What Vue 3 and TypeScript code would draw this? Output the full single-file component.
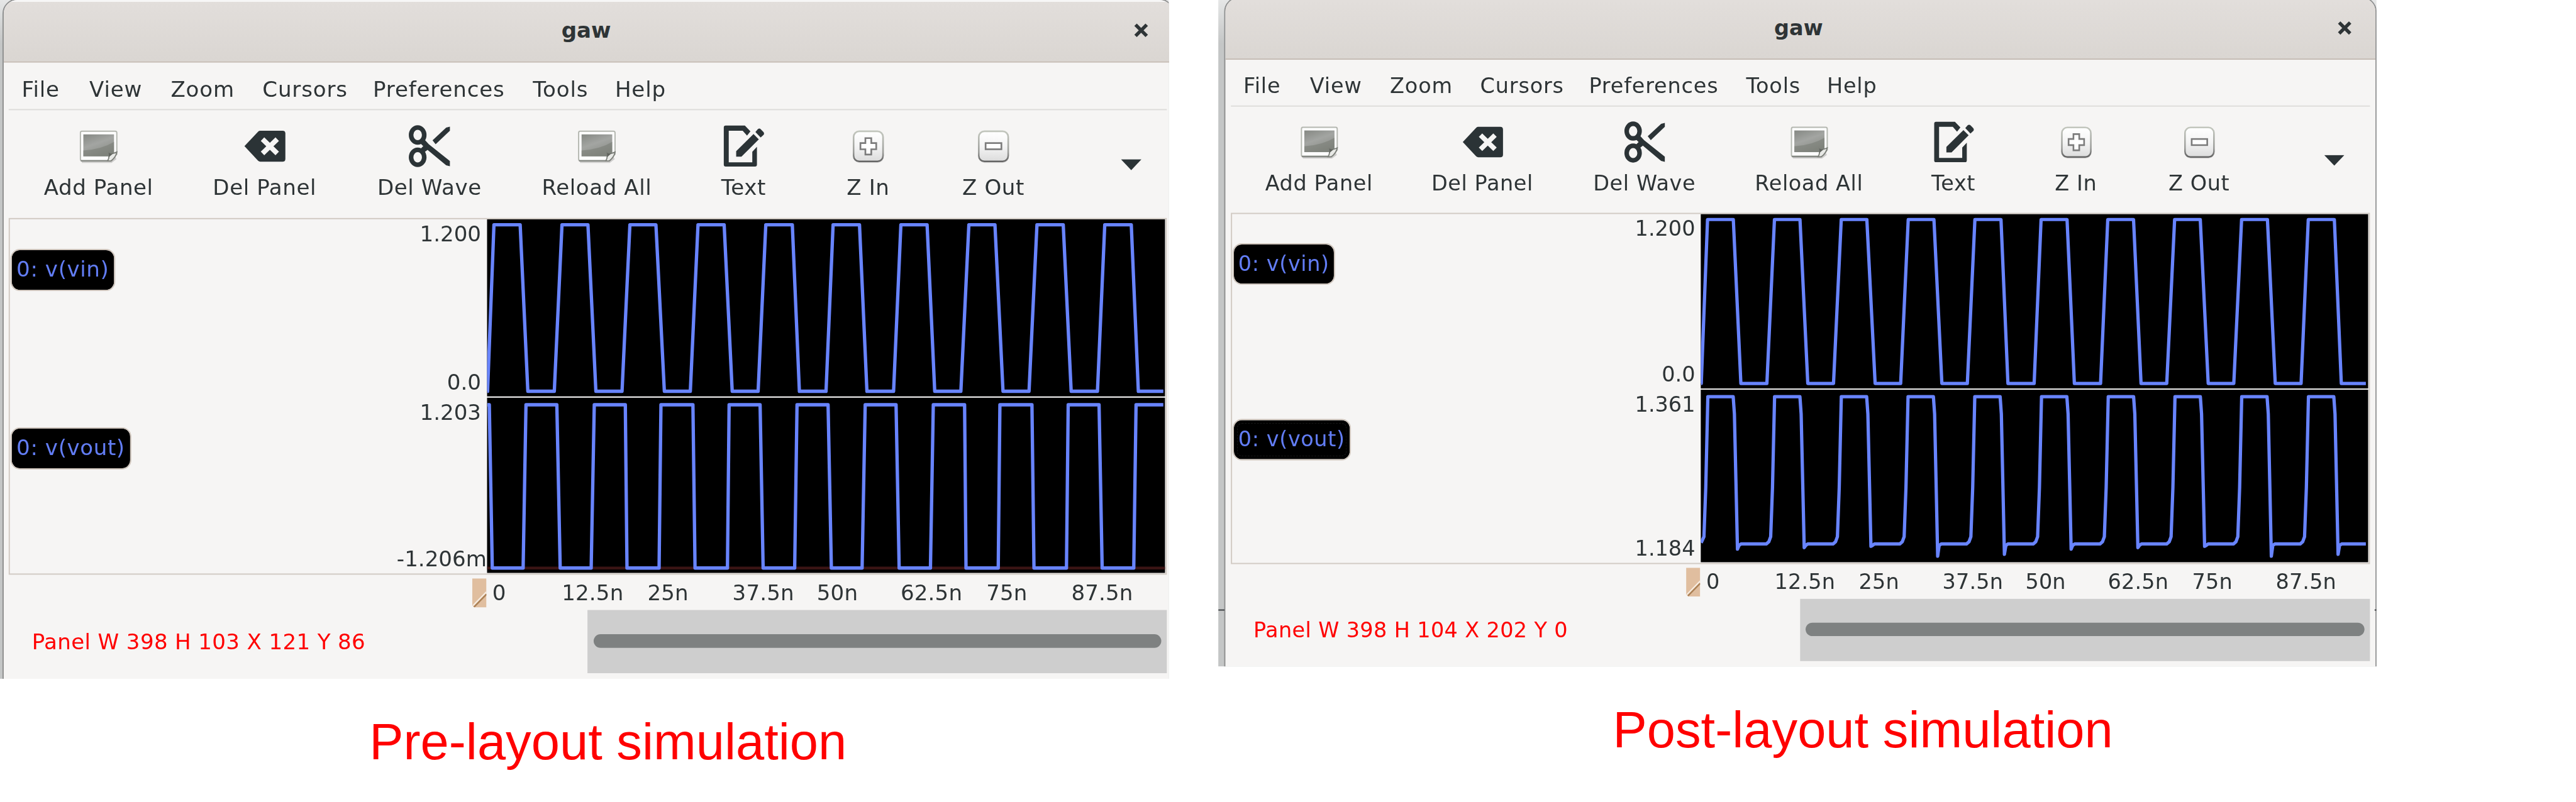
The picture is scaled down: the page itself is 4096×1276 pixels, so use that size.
<script setup lang="ts">
interface Panel {
  name: string
  focus: boolean
  high: string
  low: string
  trace: string
  zeroLine: boolean
}
interface Sim {
  id: string
  caption: string
  status: string
  panels: Panel[]
}
type Point = [number, number]

const X0 = 786.4
const END = 1877.7

const toPoints = (pts: Point[]): string =>
  pts.map(([x, y]) => `${(x - X0).toFixed(1)},${y.toFixed(1)}`).join(' ')

/* Square-like wave: every pair of x values is one edge (start, end). */
function edges(first: number, high: number, low: number, startHigh: boolean, xs: number[]): string {
  const pts: Point[] = [[first, startHigh ? high : low]]
  let up = startHigh
  for (let i = 0; i < xs.length; i += 2) {
    pts.push([xs[i], up ? high : low])
    up = !up
    pts.push([xs[i + 1], up ? high : low])
  }
  pts.push([END, up ? high : low])
  return toPoints(pts)
}

const vin = edges(787, 9, 277.8, false, [
  787.2, 797.5, 839.8, 852.2, 894.9, 907.3, 949.2, 962, 1004.2, 1016.9, 1058.9, 1072.5, 1114.4, 1126.8,
  1169, 1182, 1223.8, 1236.2, 1279, 1290.4, 1333.4, 1344.8, 1387.4, 1399.4, 1442.4, 1454.2, 1496.5, 1508.8,
  1551, 1563.9, 1606, 1619, 1661, 1673.8, 1716.2, 1729, 1771.4, 1783.2, 1826, 1837.4,
])

const voutPre = edges(787, 11.6, 275.2, true, [
  790, 794.8, 844.6, 849.2, 899, 904.4, 954.4, 959.4, 1009.5, 1012.2, 1064, 1067, 1118.6, 1122,
  1174.3, 1177, 1227, 1231.9, 1282.8, 1286.6, 1336.7, 1342, 1391.6, 1396.6, 1446.4, 1451.4, 1501.9, 1506.5,
  1557, 1559.3, 1611.3, 1614, 1665.7, 1669, 1721.4, 1724.2, 1774, 1779, 1830, 1833.7,
])

function postTrace(): string {
  const high = 11.6
  const flat = 253
  const dips = [261.5, 259, 256.8, 273, 270]
  const pts: Point[] = [[787, 251]]
  for (let k = 0; k < 10; k++) {
    const b = 798 + 109.5 * k
    if (k > 0) pts.push([b - 13.6, flat], [b - 9.5, 249.5])
    pts.push([b - 6.4, 241], [b - 3.4, 160], [b, high])
    pts.push([b + 41.6, high], [b + 43.6, 40])
    pts.push([b + 48.6, dips[k % 5]], [b + 51, 255.5], [b + 54.5, flat])
  }
  pts.push([END, flat])
  return toPoints(pts)
}

const sims: Sim[] = [
  {
    id: 'pre',
    caption: 'Pre-layout simulation',
    status: 'Panel W 398 H 103 X 121 Y 86',
    panels: [
      { name: '0: v(vin)', focus: false, high: '1.200', low: '0.0', trace: vin, zeroLine: false },
      { name: '0: v(vout)', focus: false, high: '1.203', low: '-1.206m', trace: voutPre, zeroLine: true },
    ],
  },
  {
    id: 'post',
    caption: 'Post-layout simulation',
    status: 'Panel W 398 H 104 X 202 Y 0',
    panels: [
      { name: '0: v(vin)', focus: false, high: '1.200', low: '0.0', trace: vin, zeroLine: false },
      { name: '0: v(vout)', focus: true, high: '1.361', low: '1.184', trace: postTrace(), zeroLine: false },
    ],
  },
]

const menus = [
  { label: 'File', w: 109.2 },
  { label: 'View', w: 131.3 },
  { label: 'Zoom', w: 148 },
  { label: 'Cursors', w: 178.4 },
  { label: 'Preferences', w: 258 },
  { label: 'Tools', w: 132.6 },
  { label: 'Help', w: 120 },
]
const tools = [
  { label: 'Add Panel', icon: 'picture', w: 266 },
  { label: 'Del Panel', icon: 'delete', w: 270 },
  { label: 'Del Wave', icon: 'cut', w: 262 },
  { label: 'Reload All', icon: 'picture', w: 278 },
  { label: 'Text', icon: 'edit', w: 196 },
  { label: 'Z In', icon: 'plus', w: 206 },
  { label: 'Z Out', icon: 'minus', w: 198 },
]
const ticks = [
  { label: '0', w: 112 },
  { label: '12.5n', w: 138.3 },
  { label: '25n', w: 137.1 },
  { label: '37.5n', w: 136.2 },
  { label: '50n', w: 135.2 },
  { label: '62.5n', w: 138.3 },
  { label: '75n', w: 137.2 },
  { label: '87.5n', w: 140 },
]
</script>

<template>
  <div class="viewport">
    <div class="stage">
      <figure v-for="sim in sims" :key="sim.id" :class="['figure', sim.id]">
        <div class="slot">
          <div class="window">
            <header class="titlebar">
              <span class="title">gaw</span>
              <svg class="close" viewBox="0 0 25 24">
                <path d="M3.5 3 L21.5 21 M21.5 3 L3.5 21" stroke="#2e3436" stroke-width="5.6" fill="none" />
              </svg>
            </header>
            <nav class="menubar">
              <span v-for="m in menus" :key="m.label" class="menu" :style="{ width: m.w + 'px' }">{{ m.label }}</span>
            </nav>
            <div class="toolbar">
              <div v-for="t in tools" :key="t.label" class="tool" :style="{ width: t.w + 'px' }">
                <svg class="icon" viewBox="0 0 70 70">
                  <defs>
                    <linearGradient id="photo" x1="0" y1="0" x2="0.5" y2="1">
                      <stop offset="0" stop-color="#858883" />
                      <stop offset="0.5" stop-color="#a3a5a2" />
                      <stop offset="1" stop-color="#8b8e88" />
                    </linearGradient>
                    <linearGradient id="key" x1="0" y1="0" x2="0" y2="1">
                      <stop offset="0" stop-color="#ffffff" />
                      <stop offset="0.5" stop-color="#f4f4f4" />
                      <stop offset="1" stop-color="#dcdcdc" />
                    </linearGradient>
                    <linearGradient id="keyEdge" x1="0" y1="0" x2="0" y2="1">
                      <stop offset="0" stop-color="#c3c7be" />
                      <stop offset="0.7" stop-color="#9b9c99" />
                      <stop offset="1" stop-color="#646464" />
                    </linearGradient>
                  </defs>
                  <g v-if="t.icon === 'picture'">
                    <path d="M8 60 H54 L62 53 L64 57 L56 63 H8 Z" fill="#000" opacity="0.16" />
                    <path d="M8 11.800 H62 Q64.500 11.800 64.500 14.500 V49 L55 59.500 H8 Q5.800 59.500 5.800 57 V14.500 Q5.800 11.800 8 11.800 Z" fill="#fdfdfd" stroke="#b4b7b0" stroke-width="2" />
                    <path d="M6.500 59.700 H55" stroke="#858883" stroke-width="2.400" />
                    <rect x="10.500" y="17" width="49.500" height="35.500" fill="url(#photo)" />
                    <path d="M10.500 43 Q40 41 60 29 V52.500 H10.500 Z" fill="#747770" opacity="0.5" />
                    <path d="M49.500 60 Q53 55 51.500 47 Q55 50 64.500 45.500 Q63 54 55 60 Z" fill="#e8e9e6" stroke="#7b7e78" stroke-width="1.800" />
                    <path d="M51.500 54 Q52.500 50 51.500 46.500 Q55 49 59 47.500 Z" fill="#5f625c" />
                  </g>
                  <g v-else-if="t.icon === 'delete'">
                    <path d="M2.500 36 L24.500 12.500 Q26 11 28 11 H64 Q68.500 11 68.500 15.500 V56.500 Q68.500 61 64 61 H28 Q26 61 24.500 59.500 Z" fill="#2b3336" />
                    <path d="M34.500 27.500 L52.500 45 M52.500 27.500 L34.500 45" stroke="#f6f5f4" stroke-width="8" stroke-linecap="square" />
                  </g>
                  <g v-else-if="t.icon === 'cut'" fill="none" stroke="#2b3336">
                    <ellipse cx="16" cy="18" rx="10.600" ry="12" stroke-width="7.400" />
                    <ellipse cx="16" cy="54" rx="10.600" ry="12" stroke-width="7.400" />
                    <path d="M25 23 L34 33 L68 60 V68.500 L62 67 L32 42 L24 48 L19 42 L25 36 L19 30 Z" fill="#2b3336" stroke="none" />
                    <path d="M40 26.500 L62 6 L68 4.500 V11 L45 33 Z" fill="#2b3336" stroke="none" />
                  </g>
                  <g v-else-if="t.icon === 'edit'" fill="#2b3336">
                    <path d="M6 2.800 H37 L46 12 L40.500 19 L33.500 11 H11 V62 H49 V45 L56.500 37 V66 Q56.500 69 53.500 69 H6 Q3 69 3 66 V5.800 Q3 2.800 6 2.800 Z" />
                    <path d="M23 44 L51 16.500 L59.500 25 L31.500 53 H23 Z" />
                    <path d="M54 13 L58 8.500 Q60.500 6.500 63 9 L67 13 Q69 15.500 67 18 L62.500 22 Z" />
                  </g>
                  <g v-else>
                    <rect x="11" y="14" width="49" height="49" rx="10" fill="#000" opacity="0.14" />
                    <rect x="11.500" y="12" width="47.500" height="48.500" rx="9" fill="url(#key)" stroke="url(#keyEdge)" stroke-width="2.600" />
                    <path
                      v-if="t.icon === 'plus'"
                      d="M30.500 23 H40 V31 H48 V41 H40 V49.500 H30.500 V41 H22.500 V31 H30.500 Z"
                      fill="#fff" stroke="#7c7c7c" stroke-width="2.700"
                    />
                    <rect v-else x="22.500" y="31" width="25.500" height="10" fill="#fff" stroke="#7c7c7c" stroke-width="2.700" />
                  </g>
                </svg>
                <span class="tool-label">{{ t.label }}</span>
              </div>
              <svg class="more" viewBox="0 0 34 18"><path d="M0 0 H34 L17 18 Z" fill="#2b3336" /></svg>
            </div>
            <main class="panels">
              <section v-for="(p, i) in sim.panels" :key="i" class="panel">
                <div class="names">
                  <span :class="['badge', { focus: p.focus }]">{{ p.name }}</span>
                </div>
                <div class="scale">
                  <span :class="{ wide: p.high.length > 6 }">{{ p.high }}</span>
                  <span :class="{ wide: p.low.length > 6 }">{{ p.low }}</span>
                </div>
                <svg class="plot" viewBox="0 0 1094.400 286">
                  <path v-if="p.zeroLine" d="M0 275.200 H1094.400" stroke="#3a1414" stroke-width="4.600" />
                  <polyline :points="p.trace" fill="none" stroke="#6884ff" stroke-width="5.400" stroke-linejoin="round" />
                </svg>
              </section>
            </main>
            <div class="axis">
              <svg class="corner" viewBox="0 0 23 47">
                <path d="M0 0 H23 V47 H3 L0 43 Z" fill="#e0be9f" />
                <path d="M1.500 44 L23 22" stroke="#f7ece0" stroke-width="2.600" />
                <path d="M3 46 L23 25.500" stroke="#ab8055" stroke-width="2.600" />
              </svg>
              <span v-for="t in ticks" :key="t.label" class="tick" :style="{ width: t.w + 'px' }">{{ t.label }}</span>
            </div>
            <footer class="statusbar">
              <span class="status">{{ sim.status }}</span>
              <div class="scrollbar"><div class="thumb"></div></div>
            </footer>
          </div>
          <i class="mark left"></i>
          <i class="mark right"></i>
        </div>
        <figcaption class="caption">{{ sim.caption }}</figcaption>
      </figure>
    </div>
  </div>
</template>

<style>
html,
body {
  margin: 0;
  background: #fff;
}
</style>

<style scoped>
.viewport {
  width: 4096px;
  height: 1276px;
  overflow: hidden;
  background: #fff;
}
.stage {
  display: flex;
  width: 4157px;
  height: 1295px;
  transform: scale(0.98533);
  transform-origin: 0 0;
  font-family: 'DejaVu Sans', sans-serif;
  font-size: 34.6px;
  color: #2e3436;
}
.figure {
  margin: 0;
  flex: none;
  width: 1966.2px;
}
.slot {
  position: relative;
  overflow: hidden;
  background: linear-gradient(#e6e7e7, #c4c6c6 70px);
}
.pre .slot {
  width: 1885.5px;
  height: 1096px;
}
.post .slot {
  width: 1868.6px;
  height: 1076.2px;
}
.window {
  box-sizing: border-box;
  display: flex;
  flex-direction: column;
  width: 1891.4px;
  height: 1120px;
  margin: -2px 0 0 3.5px;
  border: 2px solid #8e8f8f;
  border-radius: 24px 24px 0 0;
  background: #f6f5f4;
  overflow: hidden;
}
.post .window {
  transform: matrix(0.9835, 0, 0, 0.9848, 5.5, -3);
  transform-origin: 0 0;
}
.titlebar {
  box-sizing: border-box;
  flex: none;
  display: flex;
  align-items: center;
  height: 101px;
  padding: 0 38.500px 4px 0;
  border-top: 3px solid #f7f6f6;
  border-bottom: 2.700px solid #c3bab2;
  background: linear-gradient(#e2dedb, #dad6d2);
}
.title {
  flex: 1;
  padding-left: 57px;
  text-align: center;
  font-weight: bold;
  font-size: 34.6px;
  line-height: 40px;
}
.close {
  width: 25px;
  height: 24px;
}
.menubar {
  box-sizing: border-box;
  flex: none;
  display: flex;
  height: 74.700px;
  margin-left: 8.500px;
  padding: 23px 0 0 21px;
  line-height: 40px;
  letter-spacing: 0.85px;
}
.menu {
  flex: none;
  white-space: nowrap;
}
.toolbar {
  box-sizing: border-box;
  flex: none;
  display: flex;
  width: 1869px;
  height: 176px;
  margin-left: 8.500px;
  padding-left: 12px;
  border-top: 2.700px solid #dedddb;
}
.tool {
  flex: none;
  display: flex;
  flex-direction: column;
  align-items: center;
  padding-top: 22px;
}
.icon {
  width: 70px;
  height: 70px;
}
.tool-label {
  margin-top: 13.500px;
  line-height: 40px;
  white-space: nowrap;
  letter-spacing: 0.6px;
}
.more {
  width: 33px;
  height: 18px;
  margin: 79px 0 0 106.500px;
}
.panels {
  box-sizing: border-box;
  flex: none;
  width: 1869px;
  height: 576.500px;
  margin-left: 8.500px;
  border: 2.500px solid #d1cac3;
}
.panel {
  display: flex;
  align-items: stretch;
  height: 288.300px;
  overflow: hidden;
}
.panel + .panel {
  height: 283.200px;
}
.names {
  width: 623px;
  flex: none;
}
.badge {
  box-sizing: border-box;
  display: inline-block;
  height: 67.500px;
  margin: 48.500px 0 0 1px;
  padding: 0 8px 0 7.500px;
  border: 2px solid #cfc5bc;
  border-radius: 15px;
  background: #000;
  background-clip: padding-box;
  color: #627df5;
  line-height: 63px;
  letter-spacing: 0.6px;
  vertical-align: top;
}
.focus {
  outline: 1.500px dashed #1d1d1d;
  outline-offset: -8px;
}
.scale {
  box-sizing: border-box;
  display: flex;
  flex-direction: column;
  justify-content: space-between;
  align-items: flex-end;
  width: 146.900px;
  padding: 4px 9.500px 4.500px 0;
  flex: none;
  line-height: 40px;
  white-space: nowrap;
}
.panel + .panel .scale {
  padding-bottom: 3.300px;
}
.scale .wide {
  margin-right: -9px;
}
.plot {
  flex: none;
  width: 1094.400px;
  height: 286px;
  background: #000;
}
.panel:first-child {
  background: linear-gradient(#f0f0f0, #f0f0f0) 769.900px 100% / 1094.400px 2.500px no-repeat;
}
.axis {
  flex: none;
  display: flex;
  height: 57.300px;
  padding-left: 756px;
  letter-spacing: 0.15px;
}
.corner {
  width: 23px;
  height: 47px;
  margin: 5.500px 10px 0 0;
}
.tick {
  flex: none;
  margin-top: 9px;
  line-height: 40px;
  white-space: nowrap;
}
.statusbar {
  flex: none;
  display: flex;
  height: 102px;
  color: #f00;
}
.status {
  box-sizing: border-box;
  width: 942.800px;
  padding-left: 46px;
  line-height: 102px;
  letter-spacing: 0.36px;
  white-space: nowrap;
}
.scrollbar {
  box-sizing: border-box;
  width: 935px;
  height: 102px;
  padding: 38.300px 9px 0 9.700px;
  background: #cecece;
}
.thumb {
  height: 22.500px;
  border-radius: 11.250px;
  background: #7e8181;
}
.mark {
  display: none;
}
.post .mark {
  display: block;
  position: absolute;
  top: 983.500px;
  height: 2.500px;
  background: #3c4043;
}
.post .left {
  left: 0;
  width: 10px;
}
.post .right {
  right: 0;
  width: 2.500px;
}
.caption {
  padding-left: 596px;
  margin-top: 51.400px;
  font-family: 'Liberation Sans', Arial, sans-serif;
  font-size: 82.500px;
  line-height: 100px;
  color: #f00;
  white-space: nowrap;
}
.post .caption {
  padding-left: 636.500px;
}
</style>
